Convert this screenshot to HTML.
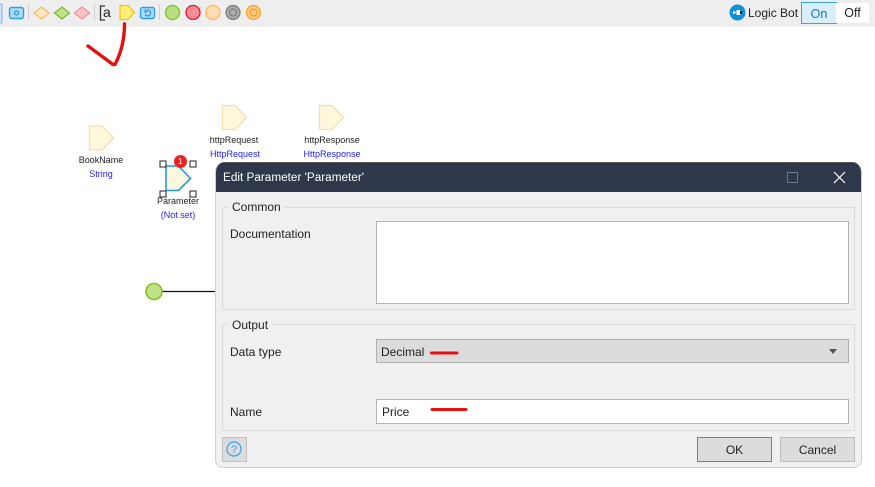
<!DOCTYPE html>
<html>
<head>
<meta charset="utf-8">
<style>
html,body{margin:0;padding:0;background:#fff}
#p{position:relative;width:875px;height:487px;overflow:hidden;background:#fff;font-family:"Liberation Sans",sans-serif;color:#222}
.a{position:absolute}
.t{position:absolute;white-space:nowrap;line-height:14px}
.c{transform:translateX(-50%);font-size:9px}
.b{color:#2222ee}
.l{font-size:12px;position:absolute;white-space:nowrap;line-height:14px;color:#222}
</style>
</head>
<body>
<div id="p">
<div class="a" style="left:0;top:0;width:875px;height:27px;background:#eeeeee"></div>
<svg class="a" style="left:0;top:0" width="300" height="27" viewBox="0 0 300 27">
<rect x="-3" y="4" width="5" height="19" rx="1" fill="#cfe3f7" stroke="#7fb2e5"/>
<rect x="9.500" y="7.500" width="14" height="11" rx="2" fill="#a9dcfb" stroke="#2f9fe8" stroke-width="1.4"/>
<circle cx="16.500" cy="13" r="2" fill="none" stroke="#2380c8"/>
<line x1="28.500" y1="4" x2="28.500" y2="20" stroke="#cfcfcf"/>
<polygon points="34,13 41.500,7 49,13 41.500,19" fill="#fde8c8" stroke="#f7b766" stroke-width="1.2"/>
<polygon points="54.500,13 62,7 69.500,13 62,19" fill="#bfe38a" stroke="#7cb82a" stroke-width="1.2"/>
<polygon points="74.500,13 82,7 89.500,13 82,19" fill="#fdc5cb" stroke="#f58a95" stroke-width="1.2"/>
<line x1="94.500" y1="4" x2="94.500" y2="20" stroke="#cfcfcf"/>
<path d="M105,6H100.500V20H105" fill="none" stroke="#333" stroke-width="1.3"/>
<polygon points="120,5.500 128,5.500 134.500,12.500 128,19.500 120,19.500" fill="#fff07a" stroke="#f5c518" stroke-width="1.3"/>
<rect x="140.500" y="7.500" width="14" height="11" rx="2" fill="#a9dcfb" stroke="#2f9fe8" stroke-width="1.4"/>
<path d="M146,10.500A3,3 0 1 1 145,14.500M145,9.500V12H147.500" fill="none" stroke="#2380c8" stroke-width="1"/>
<line x1="159.500" y1="4" x2="159.500" y2="20" stroke="#cfcfcf"/>
<circle cx="172.500" cy="12.500" r="7" fill="#b9df82" stroke="#7fc022" stroke-width="1.3"/>
<circle cx="193" cy="12.500" r="7" fill="#f98c95" stroke="#e2182a" stroke-width="1.3"/>
<circle cx="213" cy="12.500" r="7" fill="#fedcb4" stroke="#f8b864" stroke-width="1.3"/>
<circle cx="233" cy="12.500" r="7" fill="#aaaaaa" stroke="#7d7d7d" stroke-width="1.3"/>
<circle cx="233" cy="12.500" r="3.500" fill="none" stroke="#777"/>
<circle cx="253.500" cy="12.500" r="7" fill="#fdc988" stroke="#f5a623" stroke-width="1.3"/>
<circle cx="253.500" cy="12.500" r="3.500" fill="none" stroke="#f09a1a"/>
</svg>
<div class="t" style="left:103px;top:5px;font-size:14px;color:#222">a</div>
<svg class="a" style="left:729px;top:4px" width="17" height="17" viewBox="0 0 17 17">
<circle cx="8.500" cy="8.500" r="8" fill="#0f8fdc"/>
<path d="M4,6.500V10.500L7.500,8.500Z" fill="#fff"/><rect x="7.500" y="6" width="4" height="5" fill="#fff"/><rect x="11" y="7" width="2" height="3" fill="#123"/>
</svg>
<div class="t" style="left:748px;top:6px;font-size:12px;color:#222">Logic Bot</div>
<div class="a" style="left:801px;top:2px;width:34px;height:20px;background:#d9effc;border:1px solid #3aa4e8;text-align:center;font-size:12.500px;line-height:22px;color:#0f7cc4">On</div>
<div class="a" style="left:836px;top:3px;width:33px;height:20px;background:#fff;text-align:center;font-size:12.500px;line-height:21px;color:#222">Off</div>
<svg class="a" style="left:0;top:0" width="875" height="487" viewBox="0 0 875 487">
<path d="M124.500,24C124.500,40 121,53 115,64.500Q113,65 111,63L88,46" fill="none" stroke="#e01212" stroke-width="3.400" stroke-linecap="round" stroke-linejoin="round"/>
<polygon points="89.500,126 102,126 113.500,138 102,150 89.500,150" fill="#fff8dc" stroke="#fbdcae" stroke-width="1.300"/>
<polygon points="222.500,105.500 235,105.500 246.500,117.500 235,129.500 222.500,129.500" fill="#fff8dc" stroke="#fbdcae" stroke-width="1.300"/>
<polygon points="319.500,105.500 332,105.500 343.500,117.500 332,129.500 319.500,129.500" fill="#fff8dc" stroke="#fbdcae" stroke-width="1.300"/>
<polygon points="166,166 178.500,166 190.500,178.500 178.500,190.500 166,190.500" fill="#fff8dc" stroke="#1e9be8" stroke-width="1.600"/>
<rect x="160" y="161" width="6" height="6" fill="#fff" stroke="#222"/>
<rect x="190" y="161" width="6" height="6" fill="#fff" stroke="#222"/>
<rect x="160" y="191" width="6" height="6" fill="#fff" stroke="#222"/>
<rect x="190" y="191" width="6" height="6" fill="#fff" stroke="#222"/>
<circle cx="180.500" cy="161.500" r="6.500" fill="#ee2222"/>
<line x1="162" y1="291.500" x2="217" y2="291.500" stroke="#111" stroke-width="1.300"/>
<circle cx="154" cy="291.500" r="8" fill="#bfe287" stroke="#7fc022" stroke-width="1.600"/>
</svg>
<div class="t" style="left:178px;top:155px;font-size:8px;color:#fff">1</div>
<div class="t c" style="left:101px;top:153px">BookName</div>
<div class="t c b" style="left:101px;top:167px">String</div>
<div class="t c" style="left:234px;top:133px">httpRequest</div>
<div class="t c b" style="left:235px;top:147px">HttpRequest</div>
<div class="t c" style="left:332px;top:133px">httpResponse</div>
<div class="t c b" style="left:332px;top:147px">HttpResponse</div>
<div class="t c" style="left:178px;top:194px">Parameter</div>
<div class="t c b" style="left:178px;top:208px">(Not set)</div>

<div class="a" style="left:215px;top:162px;width:645px;height:305px;background:#f0f0f0;border:1px solid #d0d0d0;border-top:0;border-radius:10px 10px 8px 8px;overflow:hidden">
<div class="a" style="left:0;top:0;width:646px;height:29px;background:#2f384a;border-top:1px solid #555"></div>
<div class="t" style="left:7px;top:9px;font-size:11.750px;color:#fff">Edit Parameter 'Parameter'</div>
<svg class="a" style="left:560px;top:0" width="86" height="30" viewBox="0 0 86 30">
<rect x="11.500" y="10.500" width="10" height="10" fill="none" stroke="#6f7785"/>
<path d="M58,10L69,21M69,10L58,21" stroke="#fff" stroke-width="1.200"/>
</svg>
</div>
<div class="a" style="left:222px;top:207px;width:631px;height:101px;border:1px solid #dcdcdc"></div>
<div class="l" style="left:228px;top:200px;background:#f0f0f0;padding:0 4px">Common</div>
<div class="l" style="left:230px;top:227px">Documentation</div>
<div class="a" style="left:376px;top:221px;width:471px;height:81px;background:#fff;border:1px solid #b4b4b4"></div>
<div class="a" style="left:222px;top:324px;width:631px;height:105px;border:1px solid #dcdcdc"></div>
<div class="l" style="left:228px;top:318px;background:#f0f0f0;padding:0 4px">Output</div>
<div class="l" style="left:230px;top:345px">Data type</div>
<div class="a" style="left:376px;top:339px;width:471px;height:22px;background:#dcdcdc;border:1px solid #b0b0b0"></div>
<div class="l" style="left:381px;top:345px">Decimal</div>
<svg class="a" style="left:829px;top:349px" width="9" height="6"><polygon points="0,0 8,0 4,5" fill="#555"/></svg>
<div class="l" style="left:230px;top:405px">Name</div>
<div class="a" style="left:376px;top:399px;width:471px;height:23px;background:#fff;border:1px solid #b4b4b4"></div>
<div class="l" style="left:382px;top:405px">Price</div>
<svg class="a" style="left:0;top:0;pointer-events:none" width="875" height="487" viewBox="0 0 875 487">
<line x1="431.500" y1="353" x2="457" y2="353" stroke="#e81010" stroke-width="3" stroke-linecap="round"/>
<line x1="432" y1="409.500" x2="466" y2="409.500" stroke="#e81010" stroke-width="3" stroke-linecap="round"/>
</svg>
<div class="a" style="left:222px;top:437px;width:23px;height:23px;background:#dcdcdc;border:1px solid #c0c0c0"></div>
<svg class="a" style="left:226px;top:441px" width="16" height="16" viewBox="0 0 16 16">
<circle cx="8" cy="8" r="7" fill="none" stroke="#3aa4e8" stroke-width="1.200"/>
<text x="8" y="12" font-size="11" text-anchor="middle" fill="#3aa4e8" font-family="Liberation Sans">?</text>
</svg>
<div class="a" style="left:697px;top:437px;width:73px;height:23px;background:#dcdcdc;border:1px solid #2a9ae0;text-align:center;font-size:12px;line-height:24px;color:#222">OK</div>
<div class="a" style="left:780px;top:437px;width:73px;height:23px;background:#dcdcdc;border:1px solid #bdbdbd;text-align:center;font-size:12px;line-height:24px;color:#222">Cancel</div>
</div>
</body>
</html>
